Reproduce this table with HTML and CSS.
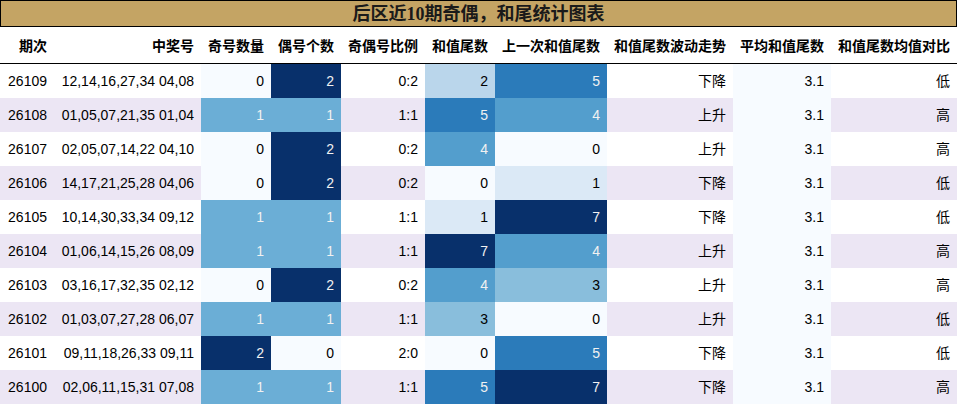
FILE: index.html
```html
<!DOCTYPE html>
<html lang="zh">
<head>
<meta charset="utf-8">
<title>后区近10期奇偶，和尾统计图表</title>
<link rel="stylesheet" href="styles.css">
</head>
<body>
<div class="sheet">
  <div class="title">后区近10期奇偶，和尾统计图表</div>
  <table class="grid">
    <colgroup>
      <col class="c-issue"><col class="c-nums"><col class="c-n70"><col class="c-n70"><col class="c-ratio"><col class="c-n70"><col class="c-prev"><col class="c-trend"><col class="c-avg"><col class="c-cmp">
    </colgroup>
    <thead>
      <tr>
        <th>期次</th><th>中奖号</th><th>奇号数量</th><th>偶号个数</th><th>奇偶号比例</th><th>和值尾数</th><th>上一次和值尾数</th><th>和值尾数波动走势</th><th>平均和值尾数</th><th>和值尾数均值对比</th>
      </tr>
    </thead>
    <tbody>
      <tr><td>26109</td><td>12,14,16,27,34 04,08</td><td class="b0">0</td><td class="b10 lt">2</td><td>0:2</td><td class="b3">2</td><td class="b7 lt">5</td><td>下降</td><td class="b0">3.1</td><td>低</td></tr>
      <tr><td>26108</td><td>01,05,07,21,35 01,04</td><td class="b5 lt">1</td><td class="b5 lt">1</td><td>1:1</td><td class="b7 lt">5</td><td class="b6 lt">4</td><td>上升</td><td class="b0">3.1</td><td>高</td></tr>
      <tr><td>26107</td><td>02,05,07,14,22 04,10</td><td class="b0">0</td><td class="b10 lt">2</td><td>0:2</td><td class="b6 lt">4</td><td class="b0">0</td><td>上升</td><td class="b0">3.1</td><td>高</td></tr>
      <tr><td>26106</td><td>14,17,21,25,28 04,06</td><td class="b0">0</td><td class="b10 lt">2</td><td>0:2</td><td class="b0">0</td><td class="b1">1</td><td>下降</td><td class="b0">3.1</td><td>低</td></tr>
      <tr><td>26105</td><td>10,14,30,33,34 09,12</td><td class="b5 lt">1</td><td class="b5 lt">1</td><td>1:1</td><td class="b1">1</td><td class="b10 lt">7</td><td>下降</td><td class="b0">3.1</td><td>低</td></tr>
      <tr><td>26104</td><td>01,06,14,15,26 08,09</td><td class="b5 lt">1</td><td class="b5 lt">1</td><td>1:1</td><td class="b10 lt">7</td><td class="b6 lt">4</td><td>上升</td><td class="b0">3.1</td><td>高</td></tr>
      <tr><td>26103</td><td>03,16,17,32,35 02,12</td><td class="b0">0</td><td class="b10 lt">2</td><td>0:2</td><td class="b6 lt">4</td><td class="b4">3</td><td>上升</td><td class="b0">3.1</td><td>高</td></tr>
      <tr><td>26102</td><td>01,03,07,27,28 06,07</td><td class="b5 lt">1</td><td class="b5 lt">1</td><td>1:1</td><td class="b4">3</td><td class="b0">0</td><td>上升</td><td class="b0">3.1</td><td>低</td></tr>
      <tr><td>26101</td><td>09,11,18,26,33 09,11</td><td class="b10 lt">2</td><td class="b0">0</td><td>2:0</td><td class="b0">0</td><td class="b7 lt">5</td><td>下降</td><td class="b0">3.1</td><td>低</td></tr>
      <tr><td>26100</td><td>02,06,11,15,31 07,08</td><td class="b5 lt">1</td><td class="b5 lt">1</td><td>1:1</td><td class="b7 lt">5</td><td class="b10 lt">7</td><td>下降</td><td class="b0">3.1</td><td>高</td></tr>
    </tbody>
  </table>
</div>
</body>
</html>
```
FILE: styles.css
```css
html, body {
  margin: 0;
  padding: 0;
  background: #ffffff;
}

.sheet {
  width: 957px;
  font-family: "Liberation Sans", "Noto Sans CJK SC", sans-serif;
  color: #000000;
}

.title {
  height: 25px;
  border: 1px solid #000000;
  background: #c4a464;
  text-align: center;
  font-family: "Liberation Serif", "Noto Sans CJK SC", serif;
  font-weight: bold;
  font-size: 18px;
  line-height: 27px;
  color: #1a1a1a;
  overflow: hidden;
}

.grid {
  width: 957px;
  border-collapse: collapse;
  table-layout: fixed;
  font-size: 14px;
}

.c-issue { width: 54px; }
.c-nums { width: 147px; }
.c-n70 { width: 70px; }
.c-ratio { width: 84px; }
.c-prev { width: 112px; }
.c-trend { width: 126px; }
.c-avg { width: 98px; }
.c-cmp { width: 126px; }

.grid th {
  padding: 9px 7px 7px 7px;
  line-height: 20px;
  font-weight: bold;
  text-align: right;
  white-space: nowrap;
  border-bottom: 1px solid #000000;
}

.grid td {
  height: 34px;
  padding: 0 7px;
  text-align: right;
  white-space: nowrap;
  line-height: 20px;
  box-sizing: border-box;
}

.grid tbody tr:nth-child(even) td {
  background: #ece6f4;
}

.grid tbody tr td.b0 { background: #f7fbff; }
.grid tbody tr td.b1 { background: #dbe9f6; }
.grid tbody tr td.b3 { background: #bad6eb; }
.grid tbody tr td.b4 { background: #89bedc; }
.grid tbody tr td.b5 { background: #6baed6; }
.grid tbody tr td.b6 { background: #539ecd; }
.grid tbody tr td.b7 { background: #2b7bba; }
.grid tbody tr td.b10 { background: #08306b; }

.grid td.lt { color: #f1f1f1; }
```
